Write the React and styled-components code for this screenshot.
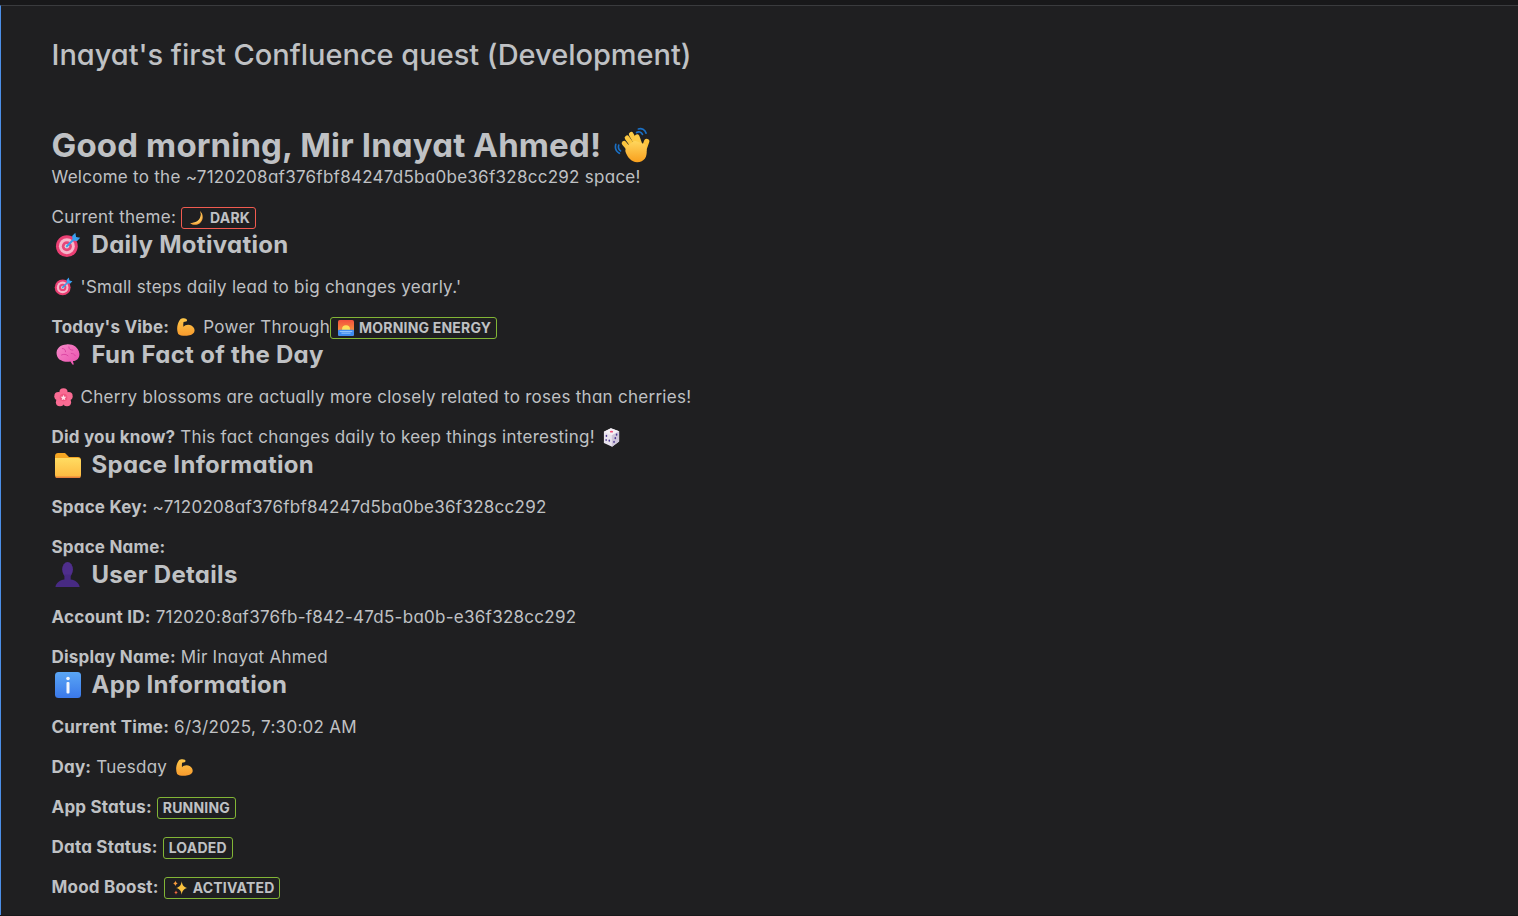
import styled, { createGlobalStyle } from "styled-components";

const GlobalStyle = createGlobalStyle`
  html, body {
    margin: 0;
    padding: 0;
    height: 100%;
    background: #18181a;
  }
  body {
    font-family: Inter, "Noto Sans", sans-serif;
    font-feature-settings: "cv11" 1;
    color: #bfc1c4;
    overflow: hidden;
  }
`;

const Frame = styled.div`
  height: 916px;
  box-sizing: border-box;
  padding: 5px 0 1px;
  background: #18181a;
`;

const Page = styled.main`
  height: 100%;
  box-sizing: border-box;
  overflow: hidden;
  border-top: 1px solid #3a3b3e;
  border-left: 1px solid #4c8fe8;
  background: #1f1f21;
  padding: 33px 50.5px 0;
`;

const Title = styled.div`
  font-size: 29px;
  line-height: 32px;
  letter-spacing: -0.02px;
  font-weight: 500;
  margin-bottom: 54px;
`;

const Greeting = styled.h1`
  display: flex;
  align-items: center;
  margin: 0;
  height: 40px;
  font-size: 33px;
  line-height: 40px;
  letter-spacing: 0.15px;
  font-weight: 700;
`;

const Heading = styled.h2`
  display: flex;
  align-items: center;
  gap: 8px;
  margin: 0 0 14px;
  height: 32px;
  font-size: 24px;
  line-height: 32px;
  letter-spacing: 0.3px;
  font-weight: 700;
`;

const Text = styled.p`
  margin: ${(props) => (props.$flush ? "0" : "0 0 16px")};
  font-size: 17px;
  line-height: 24px;
  letter-spacing: 0.27px;
  white-space: nowrap;
  &:has(+ h2) {
    margin-bottom: 0;
  }
`;

const Label = styled.strong`
  font-weight: 700;
  letter-spacing: 0.2px;
`;

const Lozenge = styled.span`
  display: inline-flex;
  align-items: center;
  gap: 5px;
  box-sizing: border-box;
  height: 22px;
  padding: 0 5px;
  margin: 2px 0 0 ${(props) => props.$gap ?? 5}px;
  border: 1px solid ${(props) => (props.$tone === "red" ? "#f15b50" : "#82b536")};
  border-radius: 3px;
  font-size: 14px;
  line-height: 20px;
  letter-spacing: 0.2px;
  font-weight: 700;
  vertical-align: top;
`;

const Icon = styled.svg`
  flex: none;
  display: ${(props) => (props.$block ? "block" : "inline-block")};
  width: ${(props) => props.$size}px;
  height: ${(props) => props.$size}px;
  vertical-align: ${(props) => props.$align ?? -4}px;
  margin: ${(props) => props.$margin ?? "0"};
`;

function Emoji({ size = 20, align, margin, block, box = "0 0 32 32", children }) {
  return (
    <Icon viewBox={box} $size={size} $align={align} $margin={margin} $block={block}>
      {children}
    </Icon>
  );
}

const Wave = (props) => (
  <Emoji {...props}>
    <defs>
      <linearGradient id="handFill" x1="0" y1="0" x2="0" y2="1">
        <stop offset="0" stopColor="#ffd75e" />
        <stop offset="1" stopColor="#f9a01e" />
      </linearGradient>
    </defs>
    <g fill="none" stroke="#1a6fc4" strokeWidth="1.4" strokeLinecap="round">
      <path d="M19 5.500c1.700-1.200 4-.6 5 1.500" />
      <path d="M20.500 2.500c2.800-1 5.500.6 6.500 3.500" />
      <path d="M4 16c-.6 1.800 0 3.800 1.500 5" />
      <path d="M1.500 15.500c-.8 3 .4 6 3 7.500" />
    </g>
    <g strokeLinecap="round" fill="none">
      <path d="M14 21L8.500 14.500" strokeWidth="4" stroke="#fcc53f" />
      <path d="M16 17L11 10" strokeWidth="4" stroke="#fdc840" />
      <path d="M19 15L14.500 7" strokeWidth="4" stroke="#fdcb45" />
      <path d="M22 16L19.500 9" strokeWidth="4" stroke="#fdcc48" />
      <path d="M25 20L27.500 13" strokeWidth="4.500" stroke="#fcc33c" />
    </g>
    <path d="M10 17l-.5 4c1.500 5 5 9.500 10 9.500 6 0 8.500-4.500 8-10l-1-5-9-3z" fill="url(#handFill)" />
  </Emoji>
);

const Dart = (props) => (
  <Emoji {...props}>
    <circle cx="14.600" cy="17.500" r="13.400" fill="#ea3f73" />
    <circle cx="14.600" cy="17.500" r="9.800" fill="#f6b7cb" />
    <circle cx="14.600" cy="17.500" r="6.200" fill="#e8467a" />
    <circle cx="14.600" cy="17.500" r="2.800" fill="#d9d2da" />
    <path d="M14.600 17.500L25 7" stroke="#3f9be8" strokeWidth="2.500" strokeLinecap="round" />
    <path d="M21 5l4-4 1 5 5 1-4 4.500-5-1.500z" fill="#39a0f0" />
  </Emoji>
);

const Moon = (props) => (
  <Emoji {...props}>
    <path d="M22 2c5 8 2 24-17 24-1.500 0-2.500-.3-3-.7 4 5 13 6 19 1.700C29 21 30 9 22 2z" fill="#f7a63c" />
    <path d="M22 2c4 7 1 22-16 24 6 2 12 1 16-3 5-5 5-15 0-21z" fill="#fbc45a" />
  </Emoji>
);

const Muscle = (props) => (
  <Emoji {...props}>
    <defs>
      <linearGradient id="armFill" x1="0" y1="0" x2="0" y2="1">
        <stop offset="0" stopColor="#ffc84a" />
        <stop offset="1" stopColor="#f79a2d" />
      </linearGradient>
    </defs>
    <path d="M7 3.500c2-1.500 7-2 9.500-.5 1.800 1.100 1.500 3.500-.5 4.200l-4 .8c-.5 2.500-.5 5-.2 7.500 3-3.500 9-4.500 13.500-1.500 4 2.600 5.500 7 3.800 10.500-2 4-8 5.500-14 5.500-5 0-10-.8-11.600-3-2.500-6.500-2.500-16 3.500-23.500z" fill="url(#armFill)" />
  </Emoji>
);

const Sunrise = (props) => (
  <Emoji box="2 2 28 28" {...props}>
    <defs>
      <linearGradient id="skyFill" x1="0" y1="0" x2="0" y2="1">
        <stop offset="0" stopColor="#f2503d" />
        <stop offset="1" stopColor="#fbb03f" />
      </linearGradient>
    </defs>
    <rect x="2" y="2" width="28" height="28" rx="3" fill="url(#skyFill)" />
    <circle cx="16" cy="18" r="7" fill="#ffe05a" />
    <rect x="2" y="19" width="28" height="11" rx="2" fill="#3e8cf0" />
    <path d="M5 22h22M8 25h16" stroke="#a7d3fb" strokeWidth="1.500" />
  </Emoji>
);

const Brain = (props) => (
  <Emoji {...props}>
    <defs>
      <linearGradient id="brainFill" x1="0" y1="0" x2="1" y2="1">
        <stop offset="0" stopColor="#f78ac8" />
        <stop offset="1" stopColor="#ea4fae" />
      </linearGradient>
    </defs>
    <path d="M2 15C1 8 7 3 14 3c7-1 15 3 16 11 .6 5-3 9.500-8 9.500l1 3.500c.2 1-1.200 1.300-1.800.5L19 24c-4 .8-8.500.3-11.500-1.500C4.500 21.500 2.500 18.500 2 15z" fill="url(#brainFill)" />
    <path d="M9 8c3 0 4 2 4 4M17 6c0 3 2 4 5 4M8 16c3-1.500 6-1 8 1M20 14c2 0 4 1 5 3" fill="none" stroke="#d9419f" strokeWidth="1.100" strokeLinecap="round" />
  </Emoji>
);

const Blossom = (props) => (
  <Emoji box="1 1 30 30" {...props}>
    <g fill="#f96b93">
      <circle cx="16" cy="8" r="6.500" />
      <circle cx="8" cy="14" r="6.500" />
      <circle cx="24" cy="14" r="6.500" />
      <circle cx="10.500" cy="23.500" r="6.500" />
      <circle cx="21.500" cy="23.500" r="6.500" />
    </g>
    <circle cx="16" cy="16" r="6" fill="#f0557f" />
    <path d="M16 11.500l1.300 3.200 3.300.3-2.500 2.200.8 3.300-2.900-1.800-2.900 1.800.8-3.300-2.500-2.200 3.300-.3z" fill="#fde0e8" />
  </Emoji>
);

const Dice = (props) => (
  <Emoji box="2 1 28 30" {...props}>
    <path d="M15 1.500l13 4.500v16.500L17 30.500 4 24.500V7z" fill="#e9e3ee" />
    <path d="M4 7l12.500 5.500L28 6 15 1.500z" fill="#f4f0f6" />
    <path d="M16.500 12.500L28 6v16.500l-11.500 8z" fill="#cfc6da" />
    <ellipse cx="16" cy="6.800" rx="2.600" ry="1.500" fill="#f0507a" />
    <g fill="#4f3a92">
      <ellipse cx="8" cy="13.500" rx="1.300" ry="1.800" />
      <ellipse cx="12.500" cy="21" rx="1.300" ry="1.800" />
      <ellipse cx="7.500" cy="20" rx="1.200" ry="1.600" />
      <ellipse cx="24" cy="11.500" rx="1.300" ry="1.800" />
      <ellipse cx="22" cy="17" rx="1.300" ry="1.800" />
      <ellipse cx="20" cy="23" rx="1.300" ry="1.800" />
    </g>
  </Emoji>
);

const Folder = (props) => (
  <Emoji box="3 3 26 26" {...props}>
    <defs>
      <linearGradient id="folderFill" x1="0" y1="0" x2="0" y2="1">
        <stop offset="0" stopColor="#ffdc62" />
        <stop offset="1" stopColor="#fdb83f" />
      </linearGradient>
    </defs>
    <path d="M3 7c0-1.700 1.300-3 3-3h7l4 4h9c1.700 0 3 1.300 3 3v4H3z" fill="#f5a623" />
    <path d="M3 9h23c1.700 0 3 1.300 3 3v14c0 1.700-1.300 3-3 3H6c-1.700 0-3-1.300-3-3z" fill="url(#folderFill)" />
    <path d="M3 27.500h26c-.4 1-1.500 1.500-3 1.500H6c-1.500 0-2.600-.5-3-1.500z" fill="#e8813a" />
  </Emoji>
);

const Bust = (props) => (
  <Emoji box="2 1 29 29" {...props}>
    <ellipse cx="16" cy="9.500" rx="6" ry="8.500" fill="#4f2e8c" />
    <path d="M12.500 15h7v5.500c5 .8 9.500 3.500 10 8.500H2.500c.5-5 5-7.700 10-8.500z" fill="#472a82" />
  </Emoji>
);

const Info = (props) => (
  <Emoji box="3 3 26 26" {...props}>
    <defs>
      <linearGradient id="infoFill" x1="0" y1="0" x2="0" y2="1">
        <stop offset="0" stopColor="#5aa6f5" />
        <stop offset="1" stopColor="#3a78ea" />
      </linearGradient>
    </defs>
    <rect x="3" y="3" width="26" height="26" rx="3.500" fill="url(#infoFill)" />
    <circle cx="16" cy="9.500" r="1.800" fill="#f2f6fd" />
    <rect x="14.500" y="13" width="3" height="11.500" rx="1" fill="#f2f6fd" />
  </Emoji>
);

const Sparkles = (props) => (
  <Emoji box="1 2 28 28" {...props}>
    <path d="M18 4c1 7 3.500 10 10 12-6.500 1.500-9 4.500-10 12-1-7.500-3.500-10.500-10-12 6.500-2 9-5 10-12z" fill="#fbc23f" />
    <path d="M7 3c.5 3 1.500 4 4 5-2.500.8-3.500 2-4 5-.5-3-1.500-4.200-4-5 2.500-1 3.500-2 4-5z" fill="#f79a3c" />
    <path d="M8 20c.4 2.400 1.200 3.200 3.500 4-2.300.7-3.100 1.500-3.500 4-.4-2.500-1.200-3.300-3.500-4 2.300-.8 3.100-1.600 3.500-4z" fill="#f2683f" />
  </Emoji>
);

const headingIcon = { size: 26, block: true, margin: "0 3px" };
const lozengeIcon = { size: 16, block: true, margin: "0 0 0 2px" };

function App() {
  return (
    <Frame>
      <GlobalStyle />
      <Page>
        <Title>Inayat's first Confluence quest (Development)</Title>

        <Greeting>
          Good morning, Mir Inayat Ahmed!
          <Wave size={38} block margin="0 0 0 13px" />
        </Greeting>
        <Text>Welcome to the ~7120208af376fbf84247d5ba0be36f328cc292 space!</Text>
        <Text>
          Current theme:
          <Lozenge $tone="red">
            <Moon {...lozengeIcon} />
            DARK
          </Lozenge>
        </Text>

        <Heading>
          <Dart {...headingIcon} />
          Daily Motivation
        </Heading>
        <Text>
          <Dart size={19} align={-3} margin="0 3px 0 2px" /> 'Small steps daily lead to big changes yearly.'
        </Text>
        <Text>
          <Label>Today's Vibe:</Label> <Muscle size={20} margin="0 2px" /> Power Through
          <Lozenge $tone="green" $gap={0}>
            <Sunrise {...lozengeIcon} />
            MORNING ENERGY
          </Lozenge>
        </Text>

        <Heading>
          <Brain {...headingIcon} />
          Fun Fact of the Day
        </Heading>
        <Text>
          <Blossom size={19} margin="0 3px 0 2px" /> Cherry blossoms are actually more closely related to roses than cherries!
        </Text>
        <Text>
          <Label>Did you know?</Label> This fact changes daily to keep things interesting!{" "}
          <Dice size={19} margin="0 0 0 2px" />
        </Text>

        <Heading>
          <Folder {...headingIcon} />
          Space Information
        </Heading>
        <Text>
          <Label>Space Key:</Label> ~7120208af376fbf84247d5ba0be36f328cc292
        </Text>
        <Text>
          <Label>Space Name:</Label>
        </Text>

        <Heading>
          <Bust {...headingIcon} />
          User Details
        </Heading>
        <Text>
          <Label>Account ID:</Label> 712020:8af376fb-f842-47d5-ba0b-e36f328cc292
        </Text>
        <Text>
          <Label>Display Name:</Label> Mir Inayat Ahmed
        </Text>

        <Heading>
          <Info {...headingIcon} />
          App Information
        </Heading>
        <Text>
          <Label>Current Time:</Label> 6/3/2025, 7:30:02 AM
        </Text>
        <Text>
          <Label>Day:</Label> Tuesday <Muscle size={19} margin="0 0 0 3px" />
        </Text>
        <Text>
          <Label>App Status:</Label>
          <Lozenge $tone="green">RUNNING</Lozenge>
        </Text>
        <Text>
          <Label>Data Status:</Label>
          <Lozenge $tone="green">LOADED</Lozenge>
        </Text>
        <Text $flush>
          <Label>Mood Boost:</Label>
          <Lozenge $tone="green">
            <Sparkles {...lozengeIcon} />
            ACTIVATED
          </Lozenge>
        </Text>
      </Page>
    </Frame>
  );
}

export default App;
